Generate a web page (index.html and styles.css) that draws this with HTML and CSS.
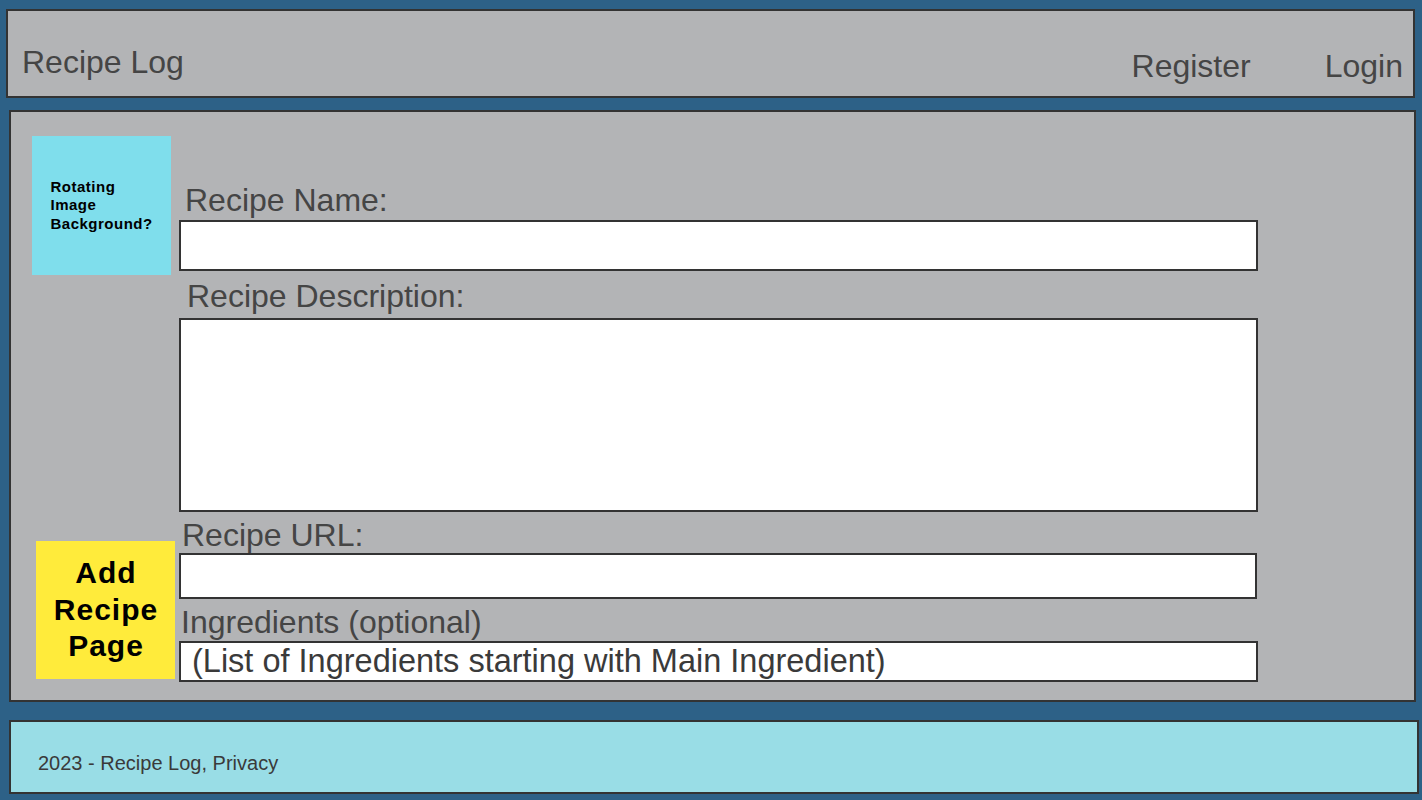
FILE: index.html
```html
<!DOCTYPE html>
<html lang="en">
<head>
<meta charset="utf-8">
<title>Recipe Log</title>
<link rel="stylesheet" href="styles.css">
</head>
<body>
<header class="topbar">
  <a class="brand" href="#">Recipe Log</a>
  <nav class="nav">
    <a href="#">Register</a>
    <a href="#">Login</a>
  </nav>
</header>
<main class="panel">
  <aside class="side">
    <div class="promo"><div class="promo-text">Rotating<br>Image<br>Background?</div></div>
    <div class="cta">Add<br>Recipe<br>Page</div>
  </aside>
  <form class="recipe-form">
    <label class="lbl lbl-name" for="name">Recipe Name:</label>
    <input class="field field-name" id="name" type="text">
    <label class="lbl lbl-desc" for="desc">Recipe Description:</label>
    <textarea class="field field-desc" id="desc"></textarea>
    <label class="lbl lbl-url" for="url">Recipe URL:</label>
    <input class="field field-url" id="url" type="text">
    <label class="lbl lbl-ing" for="ing">Ingredients (optional)</label>
    <input class="field field-ing" id="ing" type="text" placeholder="(List of Ingredients starting with Main Ingredient)">
  </form>
</main>
<footer class="foot">2023 - Recipe Log, Privacy</footer>
</body>
</html>
```
FILE: styles.css
```css
html, body {
  margin: 0;
  padding: 0;
  background: #2d6187;
}
body {
  font-family: "Liberation Sans", Arial, sans-serif;
  color: #454545;
  overflow: hidden;
}
.topbar {
  box-sizing: border-box;
  height: 89px;
  margin: 9px 7px 0 6px;
  background: #b3b4b6;
  border: 2px solid #333;
  display: flex;
  justify-content: space-between;
  align-items: flex-start;
  padding: 33px 10px 0 14px;
}
.brand, .nav a {
  font-size: 32px;
  line-height: 36px;
  color: #454545;
  text-decoration: none;
}
.nav {
  display: flex;
  gap: 74px;
  margin-top: 4px;
}
.panel {
  box-sizing: border-box;
  height: 592px;
  margin: 12px 6px 0 9px;
  background: #b3b4b6;
  border: 2px solid #333;
  display: grid;
  grid-template-columns: 168px 1079px;
}
.side {
  display: flex;
  flex-direction: column;
  justify-content: space-between;
  padding: 24px 0 21px;
}
.promo {
  width: 139px;
  height: 139px;
  margin-left: 21px;
  background: #7fdeec;
  display: flex;
  align-items: center;
  justify-content: center;
}
.promo-text {
  font-weight: bold;
  font-size: 15px;
  line-height: 18.5px;
  letter-spacing: 0.5px;
  color: #000;
  text-align: left;
  width: 102px;
}
.cta {
  box-sizing: border-box;
  width: 139px;
  height: 138px;
  margin-left: 25px;
  background: #ffeb3b;
  color: #000;
  font-weight: bold;
  font-size: 30px;
  line-height: 36.5px;
  letter-spacing: 1px;
  text-align: center;
  display: flex;
  align-items: center;
  justify-content: center;
  padding-left: 1px;
}
.recipe-form {
  display: flex;
  flex-direction: column;
  padding-top: 70px;
}
.lbl {
  display: block;
  font-size: 32px;
  line-height: 36px;
  color: #454545;
}
.lbl-name { padding-left: 6px; margin-bottom: 2px; }
.lbl-desc { padding-left: 8px; margin-top: 7px; margin-bottom: 4px; }
.lbl-url { padding-left: 3px; margin-top: 5px; margin-bottom: 0; }
.lbl-ing { padding-left: 2px; margin-top: 5px; margin-bottom: 1px; }
.field {
  display: block;
  box-sizing: border-box;
  width: 1079px;
  margin: 0;
  background: #fff;
  border: 2px solid #333;
  border-radius: 0;
  outline: none;
  font-family: "Liberation Sans", Arial, sans-serif;
  font-size: 32px;
  color: #3a3a3a;
  padding: 0 11px;
}
.field-name { height: 51px; }
.field-desc { height: 194px; resize: none; }
.field-url { height: 46px; width: 1078px; }
.field-ing { height: 41px; font-size: 32.5px; }
.field::placeholder {
  color: #3a3a3a;
  opacity: 1;
}
.foot {
  box-sizing: border-box;
  height: 74px;
  margin: 18px 3px 0 9px;
  background: #99dde6;
  border: 2px solid #333;
  padding: 29px 0 0 27px;
  font-size: 20px;
  line-height: 24px;
  color: #3a3a3a;
}
```
